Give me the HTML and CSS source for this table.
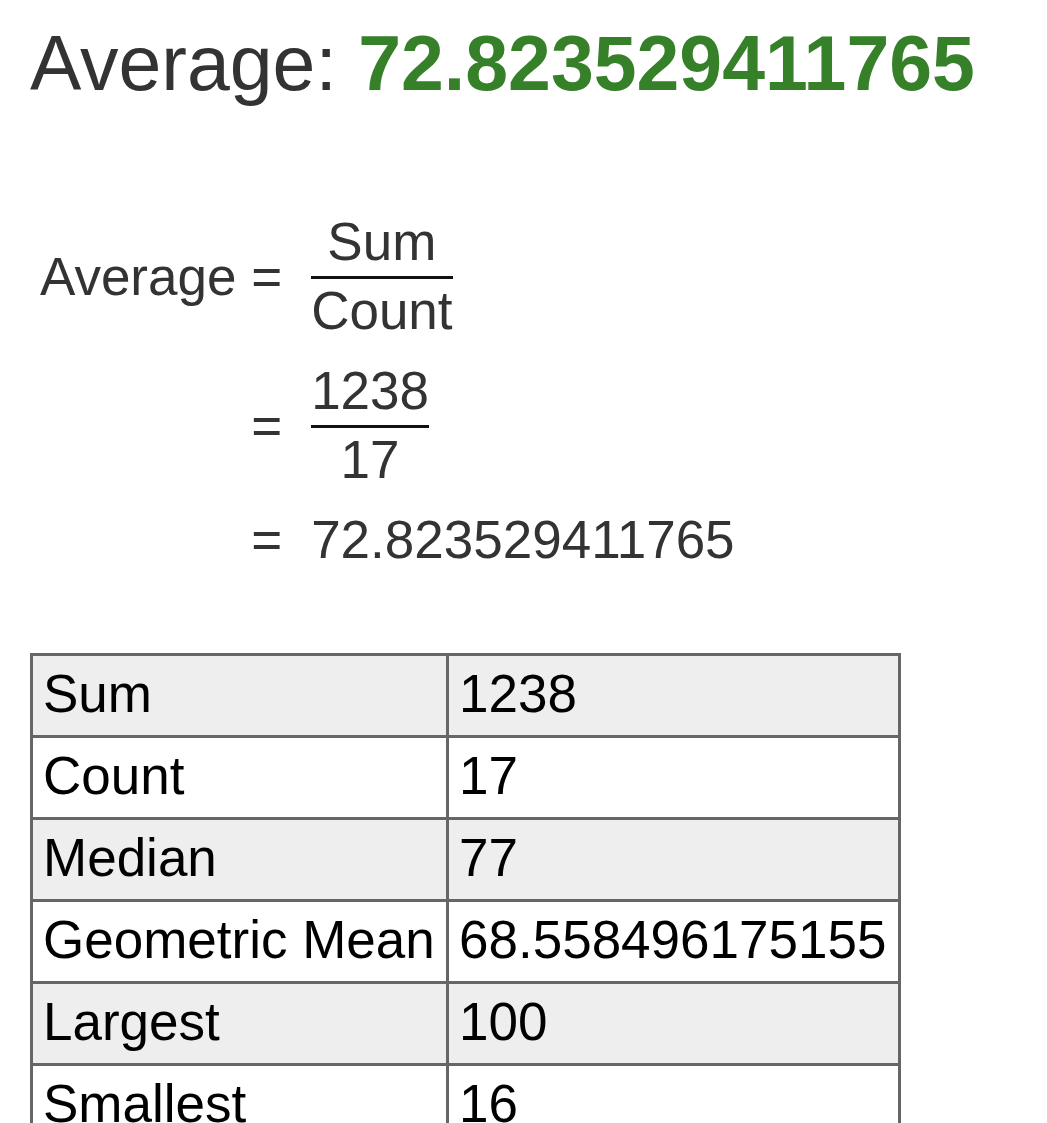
FILE: index.html
```html
<!DOCTYPE html>
<html>
<head>
<meta charset="utf-8">
<link rel="stylesheet" href="styles.css">
</head>
<body>
<div class="page">
  <h2 class="result">Average: <b class="value">72.823529411765</b></h2>

  <div class="formula">
    <div class="frow">
      <div class="lbl">Average =</div>
      <div class="frac"><div class="num">Sum</div><div class="den">Count</div></div>
    </div>
    <div class="frow">
      <div class="lbl">=</div>
      <div class="frac"><div class="num">1238</div><div class="den">17</div></div>
    </div>
    <div class="frow">
      <div class="lbl">=</div>
      <div class="plain">72.823529411765</div>
    </div>
  </div>

  <table class="stats">
    <tr class="odd"><td class="k">Sum</td><td class="v">1238</td></tr>
    <tr><td class="k">Count</td><td class="v">17</td></tr>
    <tr class="odd"><td class="k">Median</td><td class="v">77</td></tr>
    <tr><td class="k">Geometric Mean</td><td class="v">68.558496175155</td></tr>
    <tr class="odd"><td class="k">Largest</td><td class="v">100</td></tr>
    <tr><td class="k">Smallest</td><td class="v">16</td></tr>
  </table>
</div>
</body>
</html>
```

FILE: styles.css
```css
html, body {
  margin: 0;
  padding: 0;
  background: #fff;
}
body {
  font-family: "Liberation Sans", Arial, sans-serif;
  color: #333;
}
.page {
  padding-left: 30px;
}
.result {
  margin: 25px 0 0 0;
  font-size: 77px;
  line-height: 77px;
  font-weight: normal;
  color: #333;
  white-space: nowrap;
}
.value {
  color: #37802a;
  font-weight: bold;
}
.formula {
  margin-top: 110px;
  padding-left: 10px;
  display: grid;
  grid-template-columns: max-content max-content;
  column-gap: 29px;
  row-gap: 20px;
  font-size: 53px;
  line-height: 60px;
  color: #333;
}
.frow {
  display: contents;
}
.lbl {
  text-align: right;
  align-self: center;
  white-space: nowrap;
}
.frac {
  display: flex;
  flex-direction: column;
  align-items: stretch;
  justify-self: start;
  text-align: center;
}
.num {
  padding-bottom: 4px;
  border-bottom: 3px solid #111;
}
.den {
  padding-top: 2px;
}
.plain {
  white-space: nowrap;
}
.stats {
  margin-top: 83px;
  border-collapse: separate;
  border-spacing: 0;
  border-left: 3px solid #666;
  border-top: 3px solid #666;
  table-layout: fixed;
  width: 871px;
  font-size: 53px;
  line-height: 60px;
  color: #000;
}
.stats td {
  box-sizing: border-box;
  border-right: 3px solid #666;
  border-bottom: 3px solid #666;
  padding: 8px 0 11px 10px;
  white-space: nowrap;
  overflow: hidden;
}
.stats td.k {
  width: 416px;
}
.stats tr.odd td {
  background: #eee;
}
```
